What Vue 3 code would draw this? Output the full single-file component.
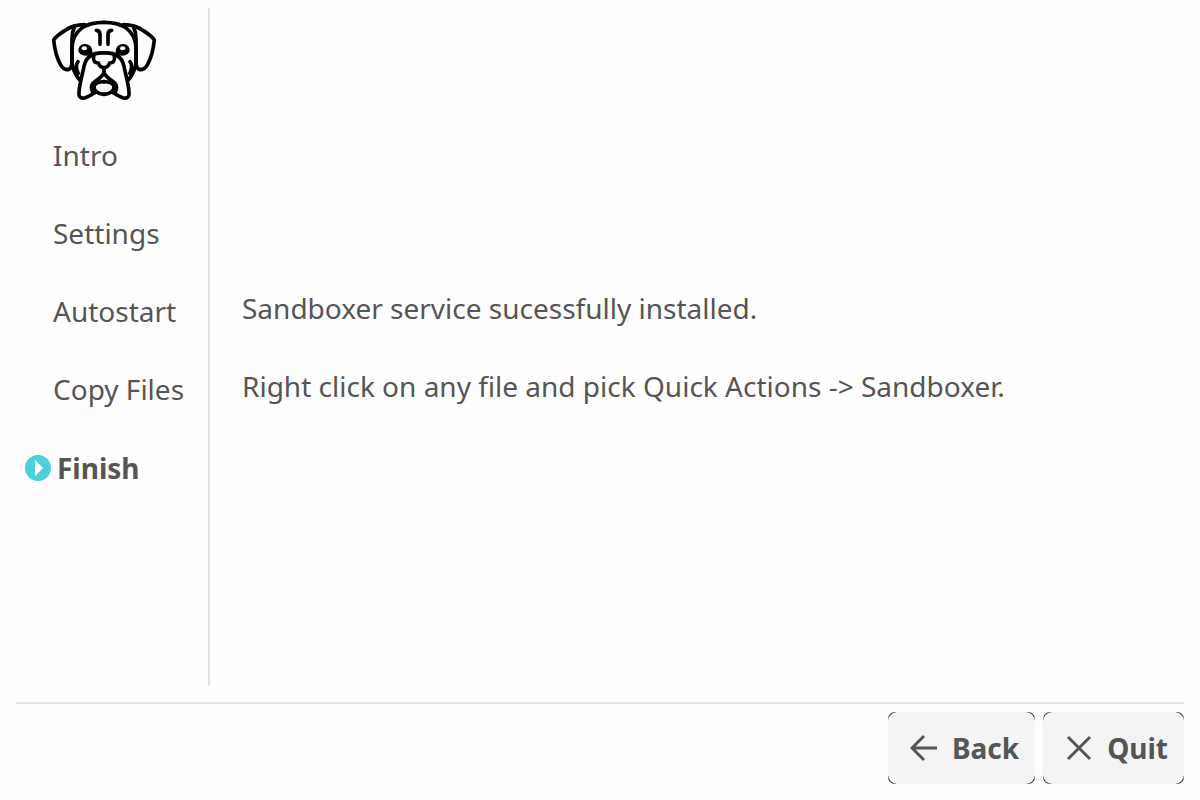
<script setup>
import { ref } from 'vue'

const steps = ['Intro', 'Settings', 'Autostart', 'Copy Files', 'Finish']
const current = ref(4)
const back = () => {
  if (current.value > 0) current.value--
}
</script>

<template>
  <div class="installer">
    <div class="body">
      <aside class="sidebar">
        <svg class="logo" viewBox="0 0 360 276" role="img" aria-label="Sandboxer">
          <g v-for="side in 2" :key="side" :transform="side === 2 ? 'translate(360 0) scale(-1 1)' : null">
            <path d="M181 25C152 25 129 30 112 43C94 57 84 78 84 105V150" />
            <path d="M122 32C94 32 76 40 62 50C48 59 36 67 29 78C32 106 38 130 48 149C55 165 67 170 77 165C87 159 83 142 84 110V75C84 58 87 48 91 40" />
            <path d="M102 143C94 152 97 168 103 178M86 157C90 173 97 186 106 197" />
            <path d="M181 117C146 115 127 130 121 153C116 179 107 206 105 234C103 251 113 256 127 250C138 246 146 240 152 236" />
            <path d="M180 162V177C174 188 164 195 155 201C144 208 141 216 143 226C145 232 148 235 152 236" />
            <path d="M149 126C147 139 151 147 163 147C166 156 171 161 181 161" />
            <path d="M181 203C164 203 150 209 150 220C150 232 164 241 181 241" />
            <path d="M157 49Q168 49 168 62V91" />
            <path class="solid" d="M128 91C113 87 103 97 103 111C107 126 130 129 145 120C146 105 142 95 128 91Z" />
            <ellipse class="glint" :cx="side === 2 ? 124 : 121" cy="103" rx="8" ry="6" />
          </g>
        </svg>
        <ol class="steps">
          <li v-for="(step, i) in steps" :key="step" :class="{ active: i === current }" :aria-current="i === current ? 'step' : null">
            <svg v-if="i === current" class="marker" viewBox="0 0 26 26" aria-hidden="true">
              <circle cx="13" cy="13" r="13" />
              <path d="M10 5L18 13L10 21Z" />
            </svg>
            <span>{{ step }}</span>
          </li>
        </ol>
      </aside>
      <main class="content">
        <p>Sandboxer service sucessfully installed.</p>
        <p>Right click on any file and pick Quick Actions -&gt; Sandboxer.</p>
      </main>
    </div>
    <footer class="actions">
      <button type="button" @click="back">
        <svg viewBox="0 0 28 28" aria-hidden="true"><path d="M27 14H2M14 2L2 14L14 26" /></svg>
        <span>Back</span>
      </button>
      <button type="button">
        <svg viewBox="0 0 28 28" aria-hidden="true"><path d="M3 3L25 25M25 3L3 25" /></svg>
        <span>Quit</span>
      </button>
    </footer>
  </div>
</template>

<style>
body {
  margin: 0;
  background: #fefefe;
}
</style>

<style scoped>
.installer {
  box-sizing: border-box;
  min-height: 100vh;
  padding: 8px 16px 16px;
  display: flex;
  flex-direction: column;
  color: #555;
  font: 28px/38px "Noto Sans", sans-serif;
}
.body {
  flex: 1;
  display: flex;
  margin-bottom: 16px;
}
.sidebar {
  box-sizing: border-box;
  width: 194px;
  flex-shrink: 0;
  border-right: 2px solid #e0e0e0;
}
.logo {
  display: block;
  width: 120px;
  height: 92px;
  margin: 6px 0 0 28px;
  fill: none;
  stroke: #000;
  stroke-width: 11;
  stroke-linecap: round;
  stroke-linejoin: round;
}
.logo .solid {
  fill: #000;
  stroke: none;
}
.logo .glint {
  fill: #fff;
  stroke: none;
}
.steps {
  list-style: none;
  margin: 30px 0 0;
  padding: 0 0 0 37px;
  display: flex;
  flex-direction: column;
  gap: 40px;
  white-space: nowrap;
}
.steps .active {
  display: flex;
  align-items: center;
  gap: 6px;
  margin-left: -28px;
  font-weight: 700;
  line-height: 40px;
}
.marker {
  width: 26px;
  height: 26px;
  fill: #4dd0d9;
}
.marker path {
  fill: #fff;
}
.content {
  flex: 1;
  display: flex;
  flex-direction: column;
  justify-content: center;
  gap: 40px;
  padding-left: 32px;
}
.content p {
  margin: 0;
}
.actions {
  display: flex;
  justify-content: flex-end;
  gap: 8px;
  padding-top: 8px;
  border-top: 2px solid #e0e0e0;
}
button {
  position: relative;
  isolation: isolate;
  display: flex;
  align-items: center;
  gap: 14px;
  height: 72px;
  padding: 0 16px 0 22px;
  border: 0;
  border-radius: 7px;
  background: #222;
  color: #555;
  font: inherit;
  font-weight: 700;
}
button::before {
  content: "";
  position: absolute;
  inset: 0;
  z-index: -1;
  border-radius: 9px;
  background: #f4f4f4;
}
button svg {
  width: 28px;
  height: 28px;
  fill: none;
  stroke: #555;
  stroke-width: 3;
}
</style>
